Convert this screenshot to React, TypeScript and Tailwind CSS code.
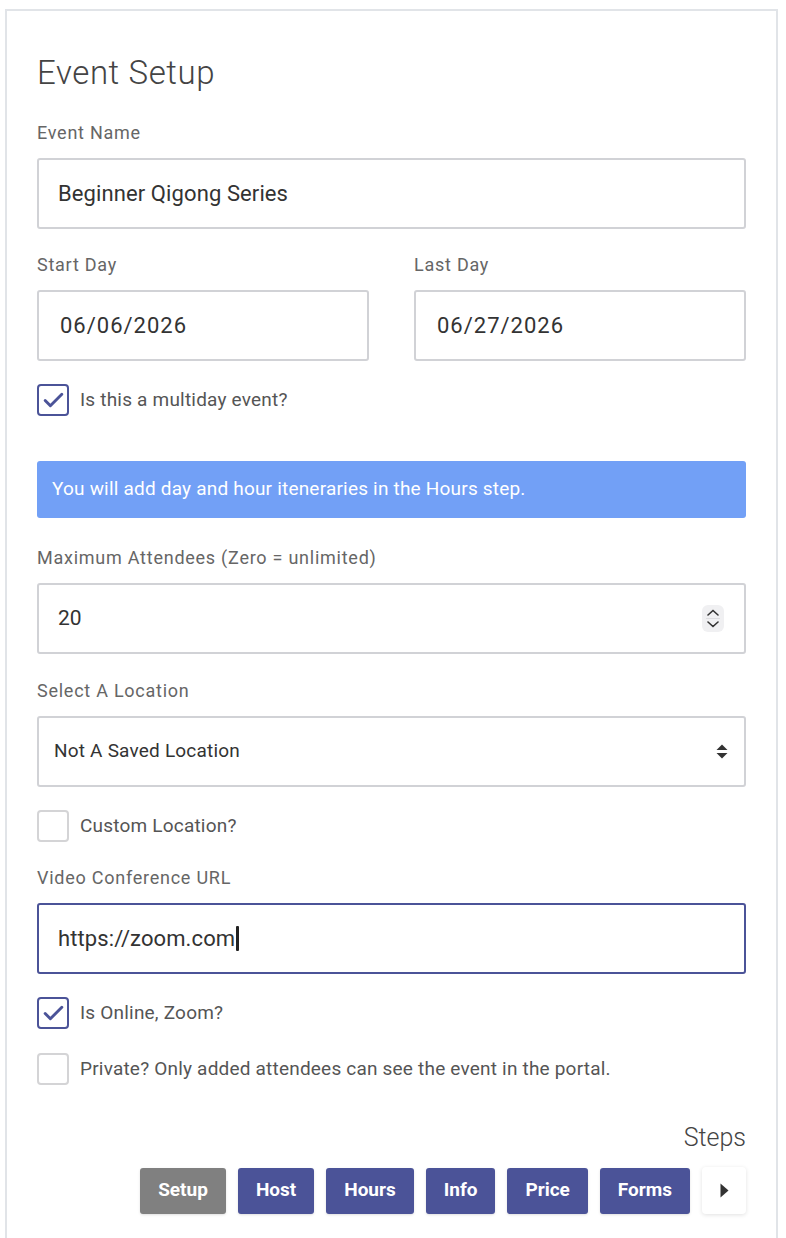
import { Check } from "lucide-react";

const font = { fontFamily: "Roboto, 'Liberation Sans', sans-serif" };

function Label({ children, className = "" }: { children: React.ReactNode; className?: string }) {
   return (
      <div className={`text-[18px] leading-[24px] tracking-[0.75px] text-[#666] mb-[13px] ${className}`}>
         {children}
      </div>
   );
}

function TextBox({
   children,
   active = false,
   className = "",
}: {
   children: React.ReactNode;
   active?: boolean;
   className?: string;
}) {
   return (
      <div
         className={`h-[71px] flex items-center rounded-[3px] border-2 bg-white text-[#333] ${
            active ? "border-[#4b5398]" : "border-[#d1d2d6]"
         } ${className}`}
      >
         {children}
      </div>
   );
}

function CheckRow({
   checked = false,
   label,
   className = "",
}: {
   checked?: boolean;
   label: string;
   className?: string;
}) {
   return (
      <div className={`flex items-center gap-[11px] ${className}`}>
         <div
            className={`w-[32px] h-[32px] shrink-0 rounded-[4px] border-2 flex items-center justify-center ${
               checked ? "border-[#4b5398]" : "border-[#d4d4d6]"
            }`}
         >
            {checked && <Check className="w-[25px] h-[25px] text-[#4b5398]" strokeWidth={2.8} />}
         </div>
         <span className="text-[19px] leading-[24px] tracking-[0.2px] text-[#555]">{label}</span>
      </div>
   );
}

const steps = ["Host", "Hours", "Info", "Price", "Forms"];

export default function App() {
   return (
      <div className="min-h-screen bg-white pt-[9px] pl-[5px]" style={font}>
         <div className="w-[773px] border-2 border-[#e1e4e8] px-[30px] pt-[44px] pb-[40px]">
            <h1 className="text-[33px] leading-[36px] font-light tracking-[0.6px] text-[#444]">
               Event Setup
            </h1>

            <Label className="mt-[30px]">Event Name</Label>
            <TextBox className="pl-[19px] text-[22px] tracking-[0.1px]">Beginner Qigong Series</TextBox>

            <div className="grid grid-cols-2 gap-[45px] mt-[24px]">
               <div>
                  <Label>Start Day</Label>
                  <TextBox className="pl-[21px] text-[22px] tracking-[1px]">06/06/2026</TextBox>
               </div>
               <div>
                  <Label>Last Day</Label>
                  <TextBox className="pl-[21px] text-[22px] tracking-[1px]">06/27/2026</TextBox>
               </div>
            </div>

            <CheckRow checked label="Is this a multiday event?" className="mt-[23px]" />

            <div className="mt-[45px] h-[57px] flex items-center px-[15px] rounded-[3px] bg-[#72a0f6] text-white text-[19px] tracking-[0.2px]">
               You will add day and hour iteneraries in the Hours step.
            </div>

            <Label className="mt-[28px]">Maximum Attendees (Zero = unlimited)</Label>
            <TextBox className="pl-[19px] pr-[20px] justify-between text-[21px]">
               <span>20</span>
               <div className="w-[22px] h-[27px] rounded-[6px] bg-[#f0f0f2] flex flex-col items-center justify-center gap-[2px]">
                  <svg width="12" height="7" viewBox="0 0 12 7" fill="none">
                     <path d="M1 6L6 1.5L11 6" stroke="#333" strokeWidth="1.6" strokeLinecap="round" />
                  </svg>
                  <div className="w-[14px] h-px bg-[#dcdcdf]" />
                  <svg width="12" height="7" viewBox="0 0 12 7" fill="none">
                     <path d="M1 1L6 5.5L11 1" stroke="#333" strokeWidth="1.6" strokeLinecap="round" />
                  </svg>
               </div>
            </TextBox>

            <Label className="mt-[25px]">Select A Location</Label>
            <TextBox className="pl-[15px] pr-[16px] justify-between text-[19px] tracking-[0.2px] text-[#222]">
               <span>Not A Saved Location</span>
               <svg width="12" height="15" viewBox="0 0 12 15">
                  <path d="M6 0.5L11.5 6H0.5Z" fill="#333" />
                  <path d="M6 14.5L11.5 9H0.5Z" fill="#333" />
               </svg>
            </TextBox>

            <CheckRow label="Custom Location?" className="mt-[23px]" />

            <Label className="mt-[24px]">Video Conference URL</Label>
            <TextBox active className="pl-[19px] text-[22px] tracking-[0.1px]">
               <span>https://zoom.com</span>
               <span className="ml-px w-[3px] h-[25px] rounded-[1px] bg-[#222]" />
            </TextBox>

            <CheckRow checked label="Is Online, Zoom?" className="mt-[23px]" />
            <CheckRow
               label="Private? Only added attendees can see the event in the portal."
               className="mt-[24px]"
            />

            <div className="mt-[37px] text-right text-[25px] leading-[32px] font-light text-[#444]">
               Steps
            </div>

            <div className="mt-[13px] flex justify-end items-center gap-[12px]">
               <button className="h-[46px] px-[18px] rounded-[3px] bg-[#808080] text-white text-[19px] font-bold shadow-sm">
                  Setup
               </button>
               {steps.map((s) => (
                  <button
                     key={s}
                     className="h-[46px] px-[18px] rounded-[3px] bg-[#4b5398] text-white text-[19px] font-bold shadow-sm"
                  >
                     {s}
                  </button>
               ))}
               <button className="h-[47px] w-[44px] rounded-[4px] bg-white shadow-[0_1px_4px_rgba(0,0,0,0.12)] flex items-center justify-center">
                  <svg width="9" height="15" viewBox="0 0 9 15">
                     <path d="M0.5 0.5L8.5 7.5L0.5 14.5Z" fill="#333" />
                  </svg>
               </button>
            </div>
         </div>
      </div>
   );
}
